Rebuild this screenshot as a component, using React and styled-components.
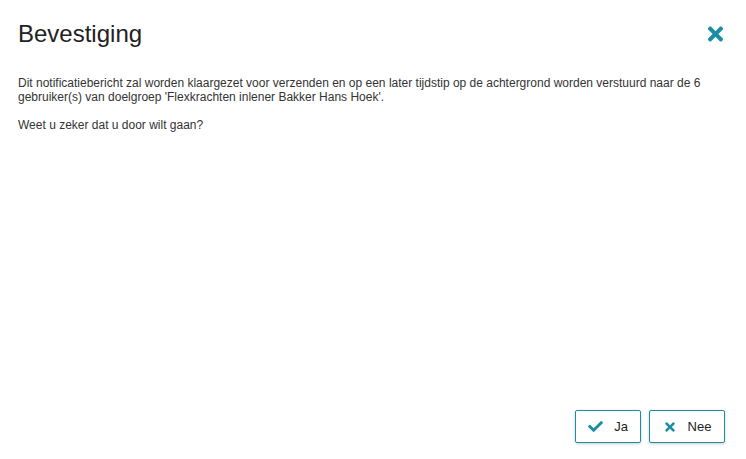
import styled, { createGlobalStyle } from 'styled-components';
import { FaCheck, FaTimes } from 'react-icons/fa';

const GlobalStyle = createGlobalStyle`
  html, body {
    margin: 0;
    padding: 0;
    background: #ffffff;
    font-family: 'Liberation Sans', Arial, sans-serif;
    color: #333333;
  }
`;

const teal = '#1b8ea3';

// Styled-components
const Dialog = styled.div`
  width: 746px;
  height: 459px;
  box-sizing: border-box;
  display: flex;
  flex-direction: column;
  background: #ffffff;
`;

const Header = styled.div`
  display: flex;
  align-items: center;
  justify-content: space-between;
  padding: 20px 21px 0 18px;
  height: 27px;
`;

const Title = styled.h1`
  margin: 0;
  font-size: 24px;
  font-weight: 400;
  color: #222222;
  line-height: 27px;
`;

const CloseButton = styled.button`
  border: none;
  background: none;
  padding: 0;
  display: flex;
  color: ${teal};
  cursor: pointer;

  svg {
    width: 19px;
    height: 22px;
  }
`;

const Body = styled.div`
  flex: 1;
  padding: 29px 18px 0 18px;
  font-size: 12px;
  line-height: 14px;
  color: #333333;
`;

const Paragraph = styled.p`
  margin: 0 0 14px 0;
`;

const Footer = styled.div`
  display: flex;
  justify-content: flex-end;
  gap: 8px;
  padding: 0 21px 16px 0;
`;

const ActionButton = styled.button`
  display: flex;
  align-items: center;
  justify-content: center;
  gap: 11px;
  height: 33px;
  width: ${(p) => p.$width}px;
  box-sizing: border-box;
  background: #ffffff;
  border: 1px solid ${teal};
  border-radius: 2px;
  box-shadow: 0 1px 3px rgba(0, 0, 0, 0.2);
  font-family: 'Liberation Sans', Arial, sans-serif;
  font-size: 13px;
  color: #222222;
  cursor: pointer;

  svg {
    color: ${teal};
    width: ${(p) => p.$icon}px;
    height: ${(p) => p.$icon}px;
  }
`;

const App = () => {
  return (
    <>
      <GlobalStyle />
      <Dialog>
        <Header>
          <Title>Bevestiging</Title>
          <CloseButton aria-label="Sluiten">
            <FaTimes />
          </CloseButton>
        </Header>

        <Body>
          <Paragraph>
            Dit notificatiebericht zal worden klaargezet voor verzenden en op een later tijdstip op de achtergrond worden verstuurd naar de 6
            <br />
            gebruiker(s) van doelgroep 'Flexkrachten inlener Bakker Hans Hoek'.
          </Paragraph>
          <Paragraph>Weet u zeker dat u door wilt gaan?</Paragraph>
        </Body>

        <Footer>
          <ActionButton $width={66} $icon={15}>
            <FaCheck />
            Ja
          </ActionButton>
          <ActionButton $width={76} $icon={14}>
            <FaTimes />
            Nee
          </ActionButton>
        </Footer>
      </Dialog>
    </>
  );
};

export default App;
